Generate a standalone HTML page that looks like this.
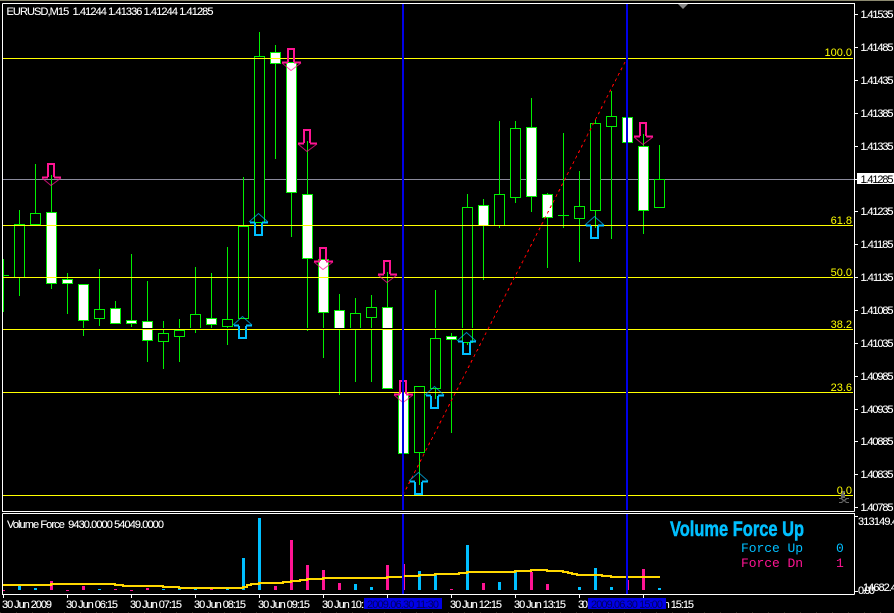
<!DOCTYPE html>
<html><head><meta charset="utf-8"><style>
html,body{margin:0;padding:0;background:#000;width:894px;height:613px;overflow:hidden}
svg{display:block;font-family:"Liberation Sans",sans-serif;font-size:11px}
.t{fill:#fff;stroke:#fff;stroke-width:.12}.y{fill:#ff0;text-anchor:end}
</style></head><body>
<svg width="894" height="613" viewBox="0 0 894 613" xmlns="http://www.w3.org/2000/svg">
<defs>
<g id="dn"><path d="M-3 14V1H3V14M-9 14.5H-3M3 14.5H10" fill="none" stroke="#ff1493" stroke-width="2" shape-rendering="crispEdges"/><path d="M-9 15L0 22.5L10 15" fill="none" stroke="#ff1493" stroke-opacity=".75"/></g>
<g id="up"><path d="M-4 10V22H3V10M-9 9.5H-4M3 9.5H9" fill="none" stroke="#00bfff" stroke-width="2" shape-rendering="crispEdges"/><path d="M-10 9L-.5 .5L9 9" fill="none" stroke="#00bfff" stroke-opacity=".7"/></g>
</defs>
<rect width="894" height="613" fill="#000"/>
<rect width="894" height="1" fill="#8c8a70"/>
<g shape-rendering="crispEdges">
<!-- bid line -->
<path d="M3 179.5H857" stroke="#8a8a9c" stroke-width="1"/>
<!-- wicks -->
<path fill="none" stroke="#00f000" d="M3.5 259V312M3 275.5H9M19.5 210V296M35.5 164V213M51.5 175V289M67.5 273V314M83.5 320V336M99.5 269V326M115.5 301V324M131.5 254V327M147.5 281V362M163.5 321V369M179.5 319V362M195.5 267V333M211.5 273V328M227.5 247V345M243.5 177V226M259.5 32V56M275.5 45V159M291.5 192V237M307.5 141V331M323.5 312V358M339.5 294V395M355.5 298V382M371.5 295V382M387.5 272V307M419.5 452V485M435.5 290V399M451.5 333V433M467.5 194V345M483.5 199V280M499.5 121V228M515.5 121V203M531.5 98V212M547.5 193V268M563.5 133V228M558 215.5H569M579.5 171V262M595.5 120V228M611.5 91V239M643.5 134V234M659.5 145V179"/>
<!-- hollow -->
<path fill="#000" stroke="#00f000" d="M14.5 224.5h10v53h-10zM30.5 213.5h10v11h-10zM94.5 309.5h10v9h-10zM158.5 333.5h10v8h-10zM174.5 330.5h10v6h-10zM190.5 314.5h10v15h-10zM222.5 319.5h10v7h-10zM238.5 226.5h10v92h-10zM254.5 56.5h10v166h-10zM350.5 313.5h10v16h-10zM366.5 307.5h10v10h-10zM414.5 386.5h10v66h-10zM430.5 338.5h10v50h-10zM462.5 207.5h10v135h-10zM494.5 194.5h10v31h-10zM510.5 128.5h10v69h-10zM574.5 206.5h10v12h-10zM590.5 123.5h10v87h-10zM606.5 116.5h10v10h-10zM654.5 179.5h10v28h-10z"/>
<!-- white -->
<path fill="#fff" stroke="#00f000" d="M46.5 212.5h10v71h-10zM62.5 279.5h10v4h-10zM78.5 284.5h10v36h-10zM110.5 308.5h10v15h-10zM126.5 320.5h10v3h-10zM142.5 321.5h10v19h-10zM206.5 318.5h10v6h-10zM270.5 52.5h10v11h-10zM286.5 62.5h10v130h-10zM302.5 194.5h10v64h-10zM318.5 259.5h10v53h-10zM334.5 310.5h10v18h-10zM382.5 307.5h10v81h-10zM398.5 392.5h10v61h-10zM446.5 336.5h10v3h-10zM478.5 205.5h10v20h-10zM526.5 127.5h10v69h-10zM542.5 194.5h10v23h-10zM622.5 117.5h10v25h-10zM638.5 146.5h10v64h-10z"/>
<!-- fib lines -->
<path d="M3 328.5H853" stroke="#000"/>
<path d="M3 58.5H853M3 225.5H853M3 277.5H853M3 329.5H853M3 392.5H853M3 495.5H853" stroke="#ffff00"/>
</g>
<!-- trend -->
<path d="M403 495L626 60" stroke="#f00" stroke-width="1" stroke-dasharray="3 3.2" fill="none" shape-rendering="crispEdges"/>
<!-- arrows -->
<use href="#dn" x="51" y="163"/><use href="#dn" x="291" y="48"/><use href="#dn" x="307" y="129"/><use href="#dn" x="323" y="247"/><use href="#dn" x="387" y="260"/><use href="#dn" x="403" y="380"/><use href="#dn" x="643" y="122"/>
<use href="#up" x="243" y="316"/><use href="#up" x="259" y="213"/><use href="#up" x="419" y="472"/><use href="#up" x="467" y="332"/><use href="#up" x="435" y="386"/><use href="#up" x="595" y="216"/>
<!-- grey marks -->
<path d="M678 4H688L683 9Z" fill="#888"/>
<path d="M841 491h4v7h-4zM843 495v4M839 498h3l2 2 2-2h3v1h-2l-2 2 2 1h2v1h-3l-2-2-2 2h-3v-1h2l2-1-2-2h-2z" fill="#666"/>
<!-- volume bars -->
<g shape-rendering="crispEdges">
<path fill="#00bfff" d="M18 586h3v4h-3zM34 588h3v2h-3zM98 589h3v1h-3zM162 589h3v1h-3zM178 589h3v1h-3zM194 589h3v1h-3zM226 589h3v1h-3zM242 558h3v32h-3zM258 518h3v72h-3zM354 584h3v6h-3zM370 587h3v3h-3zM418 571h3v19h-3zM434 575h3v15h-3zM466 545h3v45h-3zM498 582h3v8h-3zM514 572h3v18h-3zM578 587h3v3h-3zM594 568h3v22h-3zM610 587h3v3h-3zM658 588h3v2h-3z"/>
<path fill="#ff1493" d="M3 590h2v1h-2zM50 581h3v9h-3zM66 590h3v1h-3zM82 586h3v4h-3zM114 589h3v1h-3zM130 590h3v1h-3zM146 588h3v2h-3zM210 589h3v1h-3zM274 586h3v4h-3zM290 540h3v50h-3zM306 565h3v25h-3zM322 570h3v20h-3zM338 583h3v7h-3zM386 565h3v25h-3zM403 564h2v26h-2zM450 589h3v1h-3zM482 583h3v7h-3zM530 572h3v18h-3zM546 584h3v6h-3zM627 580h2v10h-2zM642 569h3v21h-3z"/>
<path fill="none" stroke="#ffd800" stroke-width="2" d="M3 585H51V584H115V585H123V586H163V587H179V588H243V587H247V585H251V584H259V583H283V582H291V581H300V580H307V579H323V578H387V577H403V576H419V575H435V574H459V573H467V572H515V571H531V570H547V571H563V572H568V573H572V574H577V575H602V576H611V577H660"/>
</g>
<!-- blue lines -->
<g shape-rendering="crispEdges" fill="#0000e6">
<rect x="402" y="4" width="2" height="506"/><rect x="402" y="514" width="2" height="80"/>
<rect x="626" y="4" width="2" height="506"/><rect x="626" y="514" width="2" height="80"/>
</g>
<!-- frames -->
<g shape-rendering="crispEdges" stroke="#fff" fill="none">
<path d="M2.5 3.5H854.5V511.5M2.5 3.5V511.5H854.5M2.5 513.5H854.5V594.5M2.5 513.5V594.5H854.5"/>
<path d="M855 14.5h3M855 47.5h3M855 80.5h3M855 113.5h3M855 146.5h3M855 179.5h3M855 211.5h3M855 244.5h3M855 277.5h3M855 310.5h3M855 343.5h3M855 376.5h3M855 409.5h3M855 441.5h3M855 474.5h3M855 507.5h3M855 516.5h3M855 591.5h3"/>
<path d="M3.5 595v3M67.5 595v3M131.5 595v3M195.5 595v3M259.5 595v3M323.5 595v3M387.5 595v3M451.5 595v3M515.5 595v3M579.5 595v3M643.5 595v3"/>
</g>
<!-- title -->
<text class="t" x="6.5" y="15" textLength="207" lengthAdjust="spacing" xml:space="preserve">EURUSD,M15  1.41244 1.41336 1.41244 1.41285</text>
<!-- price axis -->
<g class="t">
<text x="860.5" y="18" textLength="33">1.41535</text>
<text x="860.5" y="51" textLength="33">1.41485</text>
<text x="860.5" y="84" textLength="33">1.41435</text>
<text x="860.5" y="117" textLength="33">1.41385</text>
<text x="860.5" y="150" textLength="33">1.41335</text>
<text x="860.5" y="215" textLength="33">1.41235</text>
<text x="860.5" y="248" textLength="33">1.41185</text>
<text x="860.5" y="281" textLength="33">1.41135</text>
<text x="860.5" y="314" textLength="33">1.41085</text>
<text x="860.5" y="347" textLength="33">1.41035</text>
<text x="860.5" y="380" textLength="33">1.40985</text>
<text x="860.5" y="413" textLength="33">1.40935</text>
<text x="860.5" y="445" textLength="33">1.40885</text>
<text x="860.5" y="478" textLength="33">1.40835</text>
<text x="860.5" y="511" textLength="33">1.40785</text>
</g>
<rect x="857" y="173" width="37" height="11" fill="#fff"/>
<text x="860.5" y="183" textLength="33" fill="#000">1.41285</text>
<!-- fib labels -->
<text class="y" x="852" y="56">100.0</text>
<text class="y" x="852" y="224">61.8</text>
<text class="y" x="852" y="276">50.0</text>
<text class="y" x="852" y="328">38.2</text>
<text class="y" x="852" y="391">23.6</text>
<text class="y" x="852" y="494">0.0</text>
<!-- sub window -->
<text class="t" x="7" y="528" textLength="157" lengthAdjust="spacing" xml:space="preserve">Volume Force  9430.0000 54049.0000</text>
<text x="670" y="536" font-size="21" font-weight="bold" fill="#00bfff" stroke="#00bfff" stroke-width=".5" textLength="134" lengthAdjust="spacingAndGlyphs">Volume Force Up</text>
<g style="font-family:'Liberation Mono',monospace;font-size:13px">
<text x="741" y="552" fill="#00bfff" textLength="62">Force Up</text>
<text x="836" y="552" fill="#00bfff">0</text>
<text x="741" y="567" fill="#ff1493" textLength="62">Force Dn</text>
<text x="836" y="567" fill="#ff1493">1</text>
</g>
<text class="t" x="858" y="525" textLength="40">313149.4</text>
<text class="t" x="863" y="591" textLength="34">14682.4</text>
<text class="t" x="858" y="594" textLength="17">0.00</text>
<!-- time axis -->
<g class="t">
<text x="2" y="608" textLength="50">30 Jun 2009</text>
<text x="66" y="608" textLength="52">30 Jun 06:15</text>
<text x="130" y="608" textLength="52">30 Jun 07:15</text>
<text x="194" y="608" textLength="52">30 Jun 08:15</text>
<text x="258" y="608" textLength="52">30 Jun 09:15</text>
<text x="322" y="608" textLength="52">30 Jun 10:15</text>
<text x="450" y="608" textLength="52">30 Jun 12:15</text>
<text x="514" y="608" textLength="52">30 Jun 13:15</text>
<text x="578" y="608" textLength="10">30</text>
<text x="642" y="608" textLength="52">30 Jun 15:15</text>
</g>
<g shape-rendering="crispEdges" fill="#0000e6"><rect x="364" y="598" width="78" height="11"/><rect x="588" y="598" width="78" height="11"/></g>
<text x="367" y="608" textLength="72" fill="#000060">2009.06.30 11:30</text>
<text x="591" y="608" textLength="72" fill="#000060">2009.06.30 15:00</text>
<path d="M0 612.5H894" stroke="#2c2a20" stroke-dasharray="1 15"/>
</svg>
</body></html>
